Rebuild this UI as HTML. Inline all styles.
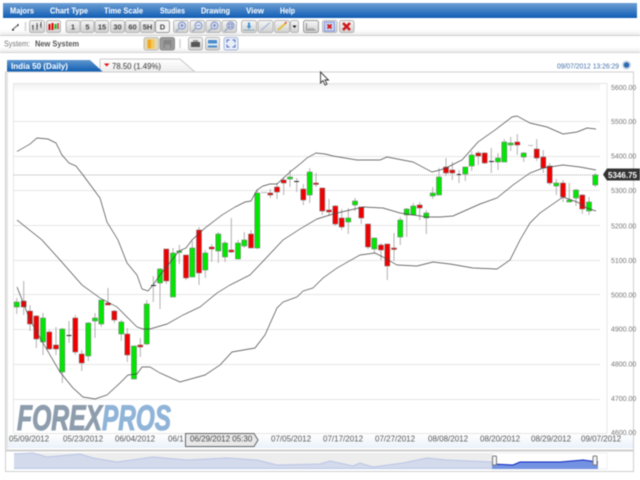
<!DOCTYPE html>
<html><head><meta charset="utf-8"><title>India 50 Chart</title>
<style>
html,body{margin:0;padding:0;background:#fff;width:640px;height:480px;overflow:hidden}
svg{display:block;filter:blur(.4px)}
text{font-family:"Liberation Sans",sans-serif}
</style></head><body>
<svg width="640" height="480" viewBox="0 0 640 480" xmlns="http://www.w3.org/2000/svg">
<defs>
<linearGradient id="hd" x1="0" y1="0" x2="0" y2="1"><stop offset="0" stop-color="#6d9fd4"/><stop offset="1" stop-color="#0f5cb4"/></linearGradient>
<linearGradient id="tab" x1="0" y1="0" x2="0" y2="1"><stop offset="0" stop-color="#5f97d0"/><stop offset="1" stop-color="#0d5bb0"/></linearGradient>
<linearGradient id="btn" x1="0" y1="0" x2="0" y2="1"><stop offset="0" stop-color="#f7f7f7"/><stop offset="1" stop-color="#cfcfcf"/></linearGradient>
<linearGradient id="row" x1="0" y1="0" x2="0" y2="1"><stop offset="0" stop-color="#fff"/><stop offset=".7" stop-color="#fff"/><stop offset="1" stop-color="#ececec"/></linearGradient>
<linearGradient id="t2" x1="0" y1="0" x2="0" y2="1"><stop offset="0" stop-color="#fff"/><stop offset="1" stop-color="#ededed"/></linearGradient>
<linearGradient id="band" x1="0" y1="0" x2="0" y2="1"><stop offset="0" stop-color="#fff"/><stop offset="1" stop-color="#eaf2fa"/></linearGradient>
<linearGradient id="top" x1="0" y1="0" x2="0" y2="1"><stop offset="0" stop-color="#f2f2f2"/><stop offset="1" stop-color="#fff"/></linearGradient>
</defs>
<!-- header -->
<rect x="3" y="3" width="634" height="15" fill="url(#hd)"/>
<g fill="#fff" font-size="8.5" font-weight="bold">
<text x="10" y="13.5" textLength="24" lengthAdjust="spacingAndGlyphs">Majors</text>
<text x="50" y="13.5" textLength="38" lengthAdjust="spacingAndGlyphs">Chart Type</text>
<text x="104" y="13.5" textLength="39" lengthAdjust="spacingAndGlyphs">Time Scale</text>
<text x="160" y="13.5" textLength="25" lengthAdjust="spacingAndGlyphs">Studies</text>
<text x="201" y="13.5" textLength="29" lengthAdjust="spacingAndGlyphs">Drawing</text>
<text x="246" y="13.5" textLength="18" lengthAdjust="spacingAndGlyphs">View</text>
<text x="280" y="13.5" textLength="15" lengthAdjust="spacingAndGlyphs">Help</text>
</g>
<!-- rows -->
<rect x="0" y="18" width="640" height="17" fill="url(#row)"/>
<rect x="0" y="35" width="640" height="1" fill="#cfcfcf"/>
<rect x="0" y="36" width="640" height="16" fill="url(#row)"/>
<rect x="0" y="52" width="640" height="1" fill="#d5d5d5"/>
<!-- toolbar 1 -->
<path d="M12 30L18 25" stroke="#555" fill="none"/><path d="M12 30h2" stroke="#111" fill="none"/><path d="M18 24v2" stroke="#111"/>
<rect x="24.500" y="22" width="2" height="9" fill="#ddd"/>
<g fill="url(#btn)" stroke="#b5b5b5">
<rect x="29.500" y="20.500" width="15" height="12" rx="2"/><rect x="46.500" y="20.500" width="14" height="12" rx="2"/>
<rect x="66" y="20.500" width="14" height="12" rx="2"/><rect x="80.500" y="20.500" width="13.500" height="12" rx="2"/><rect x="95" y="20.500" width="13.500" height="12" rx="2"/><rect x="110.500" y="20.500" width="14" height="12" rx="2"/><rect x="125.500" y="20.500" width="14" height="12" rx="2"/><rect x="140.500" y="20.500" width="14" height="12" rx="2"/>
<rect x="155.500" y="20.500" width="14" height="12" rx="2" fill="#f4f4f4" stroke="#999"/>
<rect x="173.500" y="20.500" width="14.500" height="12" rx="2"/><rect x="190" y="20.500" width="14.500" height="12" rx="2"/><rect x="206" y="20.500" width="14.500" height="12" rx="2"/><rect x="222" y="20.500" width="14.500" height="12" rx="2"/>
<rect x="241.500" y="20.500" width="15" height="12" rx="2"/><rect x="258" y="20.500" width="15" height="12" rx="2"/><rect x="274.500" y="20.500" width="15" height="12" rx="2"/><rect x="290.500" y="20.500" width="8" height="12" rx="2"/>
<rect x="303.500" y="20.500" width="15" height="12" rx="2" stroke="#999"/>
<rect x="322.500" y="20.500" width="14.500" height="12" rx="2"/><rect x="339.500" y="20.500" width="14.500" height="12" rx="2"/>
</g>
<path d="M33 25v5M37 23v7M41 22v6" stroke="#555" fill="none"/>
<path d="M32 26h1M37 26h1M40 25h1" stroke="#333" fill="none"/>
<path d="M49.500 24v6" stroke="#d00" stroke-width="2"/><path d="M52.500 23v7" stroke="#d00" stroke-width="2"/><path d="M55.500 24v5" stroke="#0c0" stroke-width="2"/><path d="M58 23v6" stroke="#c33" stroke-width="1.500"/>
<g font-size="7.500" font-weight="bold" fill="#444" text-anchor="middle">
<text x="73" y="29.500">1</text><text x="87.500" y="29.500">5</text><text x="102" y="29.500">15</text><text x="117.500" y="29.500">30</text><text x="132.500" y="29.500">60</text><text x="147.500" y="29.500">5H</text><text x="162.500" y="29.500">D</text>
</g>
<g fill="#e3e9f7" stroke="#7c8fc4">
<circle cx="182" cy="25.500" r="3.500"/><circle cx="198.500" cy="25.500" r="3.500"/><circle cx="214.500" cy="25.500" r="3.500"/><circle cx="230.500" cy="25.500" r="3.500"/>
</g>
<path d="M179 28.500l-3 3M195.500 28.500l-3 3M211.500 28.500l-3 3M227.500 28.500l-3 3" stroke="#9ab" stroke-width="1.500" fill="none"/>
<path d="M180 25.500h4M182 23.500v4M196.500 25.500h4M212.500 25.500h4M214.500 23.500v4M229 24h3v3h-3z" stroke="#5a6fa8" stroke-width=".8" fill="none"/>
<path d="M249 22.500v5" stroke="#3a8fd8" stroke-width="2"/><path d="M246.500 26h5l-2.500 3z" fill="#3a8fd8"/><path d="M243.500 30h11" stroke="#8ab" fill="none"/>
<path d="M261 30.500l9-8" stroke="#a9bedb" stroke-width="1.500" fill="none"/>
<path d="M278 30l8-7" stroke="#e0c040" stroke-width="2" fill="none"/><path d="M285 23.500l1.500-1.500" stroke="#d44" stroke-width="1.500"/>
<path d="M292.500 25.500h4l-2 2.500z" fill="#111"/>
<path d="M306.500 23v7h9" stroke="#888" fill="none"/><path d="M308.500 28.500h6" stroke="#777" stroke-dasharray="1 1" fill="none"/>
<rect x="324.500" y="22" width="10" height="9" fill="#c8d4f4" stroke="#7f96de"/>
<path d="M327.500 24.500l4 4M331.500 24.500l-4 4" stroke="#d01818" stroke-width="1.800"/>
<path d="M343 23l7 7M350 23l-7 7" stroke="#d01818" stroke-width="2.600"/>
<!-- row 2 -->
<text x="4" y="46.500" font-size="8" fill="#777" textLength="26" lengthAdjust="spacingAndGlyphs">System:</text>
<text x="35" y="46.500" font-size="8" font-weight="bold" fill="#555" textLength="44" lengthAdjust="spacingAndGlyphs">New System</text>
<rect x="144" y="37.500" width="14.500" height="12.500" rx="2" fill="#e4d9b4" stroke="#bbb"/>
<rect x="147.500" y="39.500" width="3.500" height="9" fill="#f0a820"/><rect x="151" y="39.500" width="3.500" height="9" fill="#f5c860"/>
<rect x="160" y="37.500" width="14.500" height="12.500" rx="2" fill="#9a9a9a" stroke="#8c8c8c"/>
<rect x="163.500" y="40" width="8" height="8" fill="#858585"/><rect x="165" y="44.500" width="5" height="3.500" fill="#9c9c9c"/>
<rect x="179" y="39" width="2" height="9" fill="#ddd"/>
<g fill="url(#btn)" stroke="#b5b5b5"><rect x="188.500" y="37.500" width="14" height="12.500" rx="2"/><rect x="205.500" y="37.500" width="14" height="12.500" rx="2"/><rect x="224" y="37.500" width="14" height="12.500" rx="2" fill="#e8eefa" stroke="#a8b6d8"/></g>
<rect x="191" y="42" width="9" height="5" fill="#555"/><rect x="193" y="40" width="5" height="2" fill="#999"/>
<rect x="208" y="40" width="9" height="7.500" fill="#4a8ccc"/><rect x="208" y="43.500" width="9" height="2" fill="#dcebf4"/>
<path d="M227 42.500V40h2.500M232.500 40H235V42.500M235 44.500V47H232.500M229.500 47H227V44.500" fill="none" stroke="#4a6fb8"/>
<!-- tabs -->
<path d="M100 71V60q0-1 1-1H180L195 72H100z" fill="url(#t2)" stroke="#c8c8c8"/>
<path d="M7 72V61q0-1 1-1H90L103 72z" fill="url(#tab)"/>
<text x="11" y="69" font-size="8.500" font-weight="bold" fill="#fff" textLength="57" lengthAdjust="spacingAndGlyphs">India 50 (Daily)</text>
<path d="M104 63.500h5.500l-2.750 3z" fill="#e01010"/>
<text x="112" y="69" font-size="8.500" fill="#333" textLength="49" lengthAdjust="spacingAndGlyphs">78.50 (1.49%)</text>
<text x="557" y="68.500" font-size="7.500" fill="#3f6fa8" textLength="62" lengthAdjust="spacingAndGlyphs">09/07/2012 13:26:29</text>
<circle cx="626.500" cy="65" r="4.500" fill="#c8d4e4"/><circle cx="626.500" cy="65" r="2.800" fill="#2e6cb0"/>
<!-- frame -->
<rect x="5.500" y="72" width="628" height="378" fill="#fff" stroke="#cfcfcf"/>
<rect x="6" y="73" width="2" height="376" fill="#e6e6e6"/>
<rect x="13.500" y="83.500" width="593.500" height="350" fill="#fff" stroke="#e6e6e6"/>
<rect x="14" y="84" width="586" height="8" fill="url(#top)"/>
<rect x="8" y="434" width="625" height="14" fill="url(#band)"/>
<!-- grid -->
<path d="M14 121.500H600M14 156.500H600M14 190.500H600M14 225.500H600M14 260.500H600M14 294.500H600M14 329.500H600M14 364.500H600M14 399.500H600" stroke="#e6e6e6" fill="none"/>
<path d="M14 175H600" stroke="#aaa" stroke-dasharray="1 1" fill="none"/>
<!-- logo -->
<text x="17" y="430" font-size="35" font-weight="bold" font-style="italic" fill="#8e9dad" stroke="#8e9dad" stroke-width="1.100" textLength="85" lengthAdjust="spacingAndGlyphs">FOREX</text>
<text x="102" y="430" font-size="35" font-weight="bold" font-style="italic" fill="#8fb4d8" stroke="#8fb4d8" stroke-width="1.100" textLength="69" lengthAdjust="spacingAndGlyphs">PROS</text>
<!-- wicks -->
<path stroke="#b0b0b0" stroke-width="1" fill="none" d="M16.700 298V314M23.700 281V315M30 305V331M36.300 315V348M43 313V355M49.300 330V350M56 327V355M62.300 328V383M69 321V343M75.300 315V355M81.700 350V371M88.300 322V361M95 313V338M101.300 300V327M108 288V305M114.300 310V323M121.300 320V341M127.300 328V362M134 346V379M140.300 338V357M146.700 300V345M153.300 276V302M160 268V309M166.300 249V284M173 248V297M179.300 245V264M186 255V280M192.300 241V277M199 227V285M205.300 250V278M211.700 244V262M218.300 232V263M225 241V262M231.300 218V253M238 240V259M244.300 232V248M251 230V248M257.300 190V249M270.300 189V198M277 183V199M283.700 178V195M290 170V187M296.700 178V192M303.300 184V205M309.700 168V203M316 173V187M322.300 188V215M329 199V216M335.300 205V226M341.700 209V230M348.300 208V234M355 198V211M361.300 207V224M368 224V249M374.300 238V253M381 243V260M387.300 244V280M394 233V261M400.300 217V245M406.700 208V237M413.300 203V215M419.700 202V220M426.300 210V234M432.700 187V199M439 168V195M446 158V176M452.300 162V180M459 170V183M465.300 167V181M471.700 151V171M478.300 151V165M484.700 152V164M491.300 148V173M498 153V170M504.300 139V162M510.700 137V151M517.300 134V155M523.700 152V162M536.700 139V161M543.300 150V173M549.700 163V185M556.300 179V195M563 180V202M569.300 183V202M576 189V206M582.300 194V214M589 197V215M595.300 173V187"/>
<!-- doji -->
<path stroke="#222" fill="none" d="M66.500 335.500h5M151 285.500h5M294 181.500h5M489 161.500h5M457 174.500h4"/>
<path stroke="#bbb" fill="none" d="M261 192.500h6M528 145.500h5"/>
<!-- red -->
<path fill="#f00000" stroke="#777" stroke-width=".6" d="M21.200 301h5v6h-5zM27.500 311h5v13h-5zM33.800 316h5v23h-5zM46.800 332h5v17h-5zM53.500 345h5v4h-5zM72.800 318h5v34h-5zM79.200 354h5v9h-5zM105.500 303h5v2h-5zM111.800 311h5v9h-5zM124.800 334h5v21h-5zM137.800 345h5v2h-5zM163.800 249h5v32h-5zM183.500 255h5v23h-5zM196.500 230h5v43h-5zM209.200 247h5v2h-5zM228.800 250h5v2h-5zM248.500 234h5v14h-5zM267.800 193h5v2h-5zM274.500 187h5v5h-5zM281.200 180h5v3h-5zM300.800 189h5v11h-5zM313.500 183h5v1.500h-5zM319.800 188h5v23h-5zM326.500 210h5v2h-5zM332.800 206h5v18h-5zM339.200 218h5v9h-5zM358.800 207h5v11h-5zM365.500 224h5v23h-5zM378.500 245h5v5h-5zM384.800 244h5v22h-5zM391.500 248h5v1.500h-5zM417.200 205h5v3h-5zM443.500 167h5v6h-5zM449.800 170h5v3h-5zM475.800 153h5v3h-5zM482.200 153h5v10h-5zM514.800 142h5v3h-5zM534.200 149h5v9h-5zM540.800 157h5v11h-5zM547.200 166h5v17h-5zM560.500 183h5v14h-5zM579.800 195h5v14h-5z"/>
<!-- green -->
<path fill="#00e800" stroke="#777" stroke-width=".6" d="M14.200 302h5v5h-5zM40.500 318h5v24h-5zM59.800 329h5v43h-5zM85.800 323h5v33h-5zM92.500 318h5v3h-5zM98.800 300h5v24h-5zM118.800 322h5v12h-5zM131.500 346h5v33h-5zM144.200 304h5v40h-5zM157.500 269h5v14h-5zM170.500 253h5v44h-5zM176.800 251h5v1.500h-5zM189.800 248h5v29h-5zM202.800 253h5v17h-5zM215.800 234h5v17h-5zM222.500 243h5v14h-5zM235.500 243h5v16h-5zM241.800 240h5v6h-5zM254.800 193h5v55h-5zM287.500 177h5v2h-5zM307.200 172h5v23h-5zM345.800 218h5v4h-5zM352.500 201h5v4h-5zM371.800 238h5v11h-5zM397.800 220h5v17h-5zM404.200 209h5v6h-5zM410.800 206h5v9h-5zM423.800 213h5v5h-5zM430.200 193h5v3h-5zM436.500 177h5v18h-5zM462.800 167h5v7h-5zM469.200 155h5v11h-5zM495.500 158h5v4h-5zM501.800 142h5v20h-5zM508.200 143h5v2h-5zM521.200 153h5v4h-5zM553.800 183h5v3h-5zM566.800 200h5v2h-5zM573.500 190h5v8h-5zM586.500 202h5v9h-5zM592.800 175h5v10h-5z"/>
<!-- bands -->
<g fill="none" stroke="#444" stroke-width=".7">
<path d="M17 151.500L30 144L37 138L48 139L56 143L62 155L69 163L76 166L83 175L100 198L107 222L118 240L127 263L137 275L142 289L148 291L153 285L160 275L172 260L179 251L186 248L192 240L205 228L222 215L235 207L245 202L251 201L257 190L263 186L270 184L277 184L290 172L300 164L307 158L316 153L325 154L333 156L357 160L380 160L387 157L413 162L432 172L440 170L446 168L462 160L478 142L495 130L512 117L517 116L530 123L547 127L563 134L577 132L587 128L596 129"/>
<path d="M17 220L42 240L60 260L82 285L100 298L117 307L137 327L143 329L150 329L167 324L183 315L200 307L217 293L230 285L250 275L267 257L283 240L300 229L317 219L333 214L363 207L383 208L400 213L427 217L440 217L453 216L480 204L497 198L513 185L530 173L543 168L563 165L580 167L596 170"/>
<path d="M17 287L30 320L43 343L60 372L73 388L83 397L95 399L107 395L120 383L128 375L137 374L142 367L150 367L160 373L180 382L205 375L220 365L232 352L255 348L265 335L277 308L283 302L297 297L303 291L313 288L323 278L337 268L360 255L375 253L383 257L397 265L417 266L433 262L450 264L473 268L497 269L510 260L520 240L530 223L540 213L563 197L577 202L587 208L596 211"/>
</g>
<!-- price labels -->
<g font-size="7" fill="#777">
<text x="611" y="90">5600.00</text><text x="611" y="124">5500.00</text><text x="611" y="158.500">5400.00</text><text x="611" y="228.500">5200.00</text><text x="611" y="263">5100.00</text><text x="611" y="297.500">5000.00</text><text x="611" y="331.500">4900.00</text><text x="611" y="366.500">4800.00</text><text x="611" y="401">4700.00</text><text x="611" y="435">4600.00</text><text x="611" y="193">5300.00</text>
</g>
<path d="M603 174.500L607 168.500H640V180.500H607z" fill="#333"/>
<text x="608" y="178" font-size="8.500" font-weight="bold" fill="#fff" textLength="29" lengthAdjust="spacingAndGlyphs">5346.75</text>
<!-- dates -->
<g font-size="8" fill="#555">
<text x="9" y="441.500">05/09/2012</text><text x="63" y="441.500">05/23/2012</text><text x="115" y="441.500">06/04/2012</text><text x="168" y="441.500">06/1</text><text x="271" y="441.500">07/05/2012</text><text x="323" y="441.500">07/17/2012</text><text x="375" y="441.500">07/27/2012</text><text x="428" y="441.500">08/08/2012</text><text x="480" y="441.500">08/20/2012</text><text x="531" y="441.500">08/29/2012</text><text x="581" y="441.500">09/07/2012</text>
</g>
<path d="M185.500 433.500H254L258 440L254 446.500H185.500z" fill="#e8e8e8" stroke="#666"/>
<text x="190" y="441.500" font-size="8" fill="#444">06/29/2012 05:30</text>
<!-- overview -->
<rect x="5.500" y="451" width="628" height="20.500" fill="#fff" stroke="#cfcfcf"/>
<rect x="14" y="453" width="478" height="16" fill="#ededed"/>
<rect x="492" y="453" width="115" height="16" fill="#fff" stroke="#e6e6e6" stroke-width=".6"/>
<path d="M14 454L33 453L47 457L80 454L93 458L117 462L153 457L187 460L227 458L257 460L277 465L320 464L330 461L353 466L360 463L373 467L403 463L427 458L447 460L492 462V469H14z" fill="#d3daec" stroke="none"/>
<path d="M14 454L33 453L47 457L80 454L93 458L117 462L153 457L187 460L227 458L257 460L277 465L320 464L330 461L353 466L360 463L373 467L403 463L427 458L447 460L492 462" fill="none" stroke="#b9c5e6"/>
<path d="M14 468.500H492" stroke="#b9c5e6" fill="none"/>
<path d="M492 464L513 465L520 462L560 462L583 460L598 462V469H492z" fill="#7392e2"/>
<path d="M492 464L513 465L520 462L560 462L583 460L598 462" fill="none" stroke="#0a22c0" stroke-width="1"/>
<rect x="492.500" y="456" width="4" height="9" rx="1" fill="#f5f5f5" stroke="#777"/>
<rect x="593" y="456" width="4" height="9" rx="1" fill="#f5f5f5" stroke="#777"/>
<!-- cursor -->
<path d="M320.500 72V83L323 80.500L325 85L327 84L325 80H328.500z" fill="#fff" stroke="#333" stroke-width=".9"/>
</svg>
</body></html>
